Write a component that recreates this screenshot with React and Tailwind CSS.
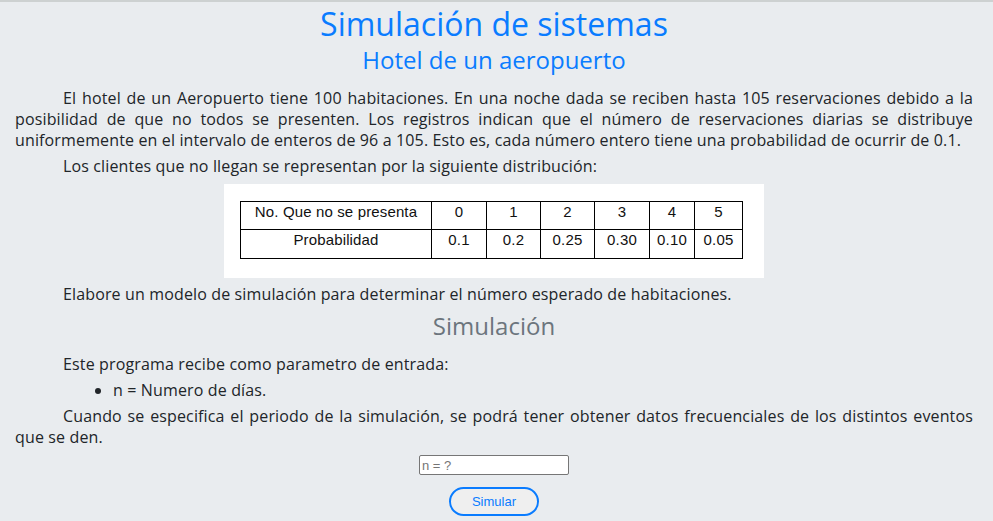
const probabilidades = [
  { n: "0", p: "0.1", w: "w-[55px]" },
  { n: "1", p: "0.2", w: "w-[54px]" },
  { n: "2", p: "0.25", w: "w-[54px]" },
  { n: "3", p: "0.30", w: "w-[55px]" },
  { n: "4", p: "0.10", w: "w-[45px]" },
  { n: "5", p: "0.05", w: "w-[48px]" },
];

const TablaDistribucion = () => (
  <div className="mx-auto w-[540px] bg-white pt-[17px] pb-[19px] pl-[16px]">
    <table className="border-collapse font-['Liberation_Sans',Arial,sans-serif] text-[15px] leading-[18px] text-[#111]">
      <tbody>
        <tr className="h-[28px]">
          <td className="w-[191px] border border-black text-center align-top pt-[1px]">
            No. Que no se presenta
          </td>
          {probabilidades.map((c) => (
            <td
              key={c.n}
              className={`${c.w} border border-black text-center align-top pt-[1px]`}
            >
              {c.n}
            </td>
          ))}
        </tr>
        <tr className="h-[29px]">
          <td className="border border-black text-center align-top pt-[1px]">
            Probabilidad
          </td>
          {probabilidades.map((c) => (
            <td
              key={c.n}
              className="border border-black text-center align-top pt-[1px]"
            >
              {c.p}
            </td>
          ))}
        </tr>
      </tbody>
    </table>
  </div>
);

export default function App() {
  return (
    <div className="min-h-[521px] border-t-2 border-[#cdd1d1] bg-[#e9ecef] pl-[15px] pr-[20px] font-['Open_Sans',sans-serif] text-[16px] leading-[21px] tracking-[0.14px] text-[#212529]">
      <h1 className="pt-[2px] text-center text-[32px] leading-[40px] tracking-normal text-[#0a7cff]">
        Simulación de sistemas
      </h1>
      <h2 className="mt-[1px] mb-[1px] text-center text-[24px] leading-[30px] tracking-normal text-[#0a7cff]">
        Hotel de un aeropuerto
      </h2>

      <p className="mt-[13px] mb-[5px] text-justify indent-[48px]">
        El hotel de un Aeropuerto tiene 100 habitaciones. En una noche dada se
        reciben hasta 105 reservaciones debido a la posibilidad de que no todos
        se presenten. Los registros indican que el número de reservaciones
        diarias se distribuye uniformemente en el intervalo de enteros de 96 a
        105. Esto es, cada número entero tiene una probabilidad de ocurrir de
        0.1.
      </p>
      <p className="mb-[7px] indent-[48px]">
        Los clientes que no llegan se representan por la siguiente
        distribución:
      </p>

      <TablaDistribucion />

      <p className="mt-[6px] indent-[48px]">
        Elabore un modelo de simulación para determinar el número esperado de
        habitaciones.
      </p>

      <h3 className="mt-[6px] mb-[13px] text-center text-[24px] leading-[30px] tracking-normal text-[#6c757d]">
        Simulación
      </h3>

      <p className="mb-[5px] indent-[48px]">
        Este programa recibe como parametro de entrada:
      </p>
      <ul className="mb-[5px] list-disc pl-[98px]">
        <li>n = Numero de días.</li>
      </ul>
      <p className="text-justify indent-[48px]">
        Cuando se especifica el periodo de la simulación, se podrá tener
        obtener datos frecuenciales de los distintos eventos que se den.
      </p>

      <div className="mt-[7px] flex flex-col items-center gap-[12px]">
        <input
          type="text"
          placeholder="n = ?"
          className="h-[20px] w-[150px] rounded-[2px] border border-[#767676] bg-white px-[2px] font-['Liberation_Sans',Arial,sans-serif] text-[13px] tracking-normal text-black placeholder:text-[#757575] outline-none"
        />
        <button
          type="button"
          className="h-[29px] w-[90px] rounded-full border-2 border-[#0a7cff] bg-[#efefef] font-['Liberation_Sans',Arial,sans-serif] text-[13px] tracking-normal text-[#0a7cff]"
        >
          Simular
        </button>
      </div>
    </div>
  );
}
